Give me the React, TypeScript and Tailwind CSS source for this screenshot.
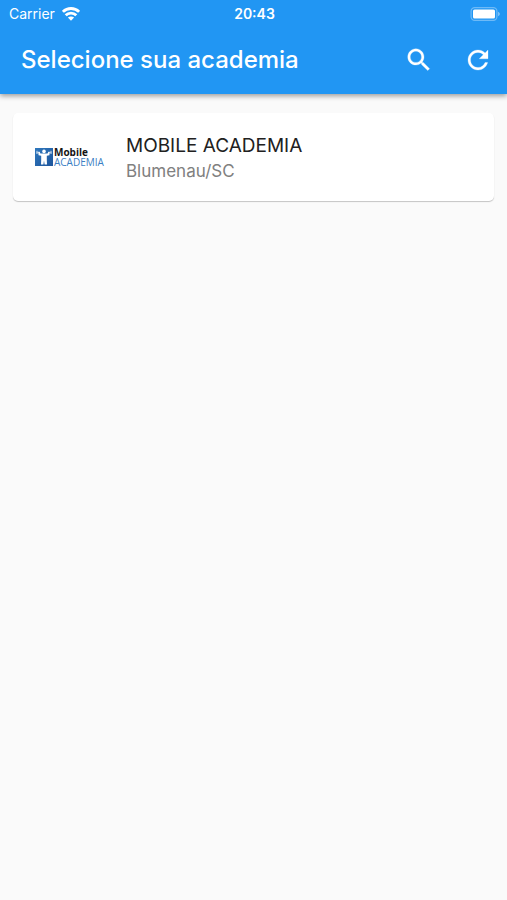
import React from "react";

type Gym = { name: string; city: string };

const gyms: Gym[] = [{ name: "MOBILE ACADEMIA", city: "Blumenau/SC" }];

function WifiIcon() {
  return (
    <svg viewBox="0 0 18 14" className="h-[14px] w-[18px]" fill="none" stroke="currentColor" strokeWidth="2.8" aria-hidden="true">
      <path d="M0.9 4.8C5.4 0.4 12.6 0.4 17.1 4.8" />
      <path d="M3.7 8.3C6.6 5.3 11.4 5.3 14.3 8.3" />
      <path d="M9 13.8L5.9 10.6C7.6 9 10.4 9 12.1 10.6Z" fill="currentColor" stroke="none" />
    </svg>
  );
}

function BatteryIcon() {
  return (
    <svg viewBox="0 0 30 14" className="h-[14px] w-[30px]" aria-hidden="true">
      <rect x="1.1" y="0.6" width="25.8" height="12.8" rx="3.6" fill="none" stroke="#fff" strokeOpacity="0.35" strokeWidth="1.2" />
      <rect x="3" y="2.4" width="22" height="9.2" rx="1.6" fill="#fff" />
      <path d="M28.2 4.8C30.2 5.6 30.2 8.4 28.2 9.2Z" fill="#fff" fillOpacity="0.5" />
    </svg>
  );
}

function SearchIcon() {
  return (
    <svg viewBox="0 0 24 24" className="size-[30px]" fill="currentColor" stroke="currentColor" strokeWidth="0.2" aria-hidden="true">
      <path d="M15.5 14h-.79l-.28-.27C15.41 12.59 16 11.11 16 9.5 16 5.91 13.09 3 9.5 3S3 5.91 3 9.5 5.91 16 9.5 16c1.61 0 3.09-.59 4.23-1.57l.27.28v.79l5 4.99L20.49 19l-4.99-5zm-6 0C7.01 14 5 11.99 5 9.5S7.01 5 9.5 5 14 7.01 14 9.5 11.99 14 9.5 14z" />
    </svg>
  );
}

function RefreshIcon() {
  return (
    <svg viewBox="0 0 24 24" className="size-[30px]" fill="currentColor" stroke="currentColor" strokeWidth="0.2" aria-hidden="true">
      <path d="M17.65 6.35C16.2 4.9 14.21 4 12 4c-4.42 0-7.99 3.58-7.99 8s3.57 8 7.99 8c3.73 0 6.84-2.55 7.73-6h-2.08c-.82 2.33-3.04 4-5.65 4-3.31 0-6-2.69-6-6s2.69-6 6-6c1.66 0 3.14.69 4.22 1.78L13 11h7V4l-2.35 2.35z" />
    </svg>
  );
}

function GymLogo() {
  return (
    <div className="flex w-[70px] shrink-0 items-center gap-px font-['Open_Sans',sans-serif]">
      <svg viewBox="0 0 18 18" className="size-[18px] shrink-0" aria-hidden="true">
        <defs>
          <linearGradient id="logo-blue" x1="0" y1="0" x2="1" y2="1">
            <stop offset="0" stopColor="#2f78bd" />
            <stop offset="1" stopColor="#1d559c" />
          </linearGradient>
        </defs>
        <rect width="18" height="18" fill="url(#logo-blue)" />
        <g fill="#fff">
          <circle cx="9" cy="3.4" r="1.8" />
          <path d="M3.2 3.8H4.6L5.4 5.6H12.6L13.4 3.8H14.8L14.4 7.2L11.8 7.8V11.4L12 16.4H9.6L9 12.4L8.4 16.4H6L6.2 11.4V7.8L3.6 7.2Z" />
          <rect x="1.4" y="2.8" width="1.2" height="3.2" opacity="0.7" />
          <rect x="15.4" y="2.8" width="1.2" height="3.2" opacity="0.7" />
          <path d="M1.6 4.2H5V4.8H1.6ZM13 4.2H16.4V4.8H13Z" opacity="0.7" />
        </g>
      </svg>
      <div className="flex flex-col whitespace-nowrap text-[10px] leading-[10px]">
        <span className="font-bold text-[#151515]">Mobile</span>
        <span className="text-[#3b7fc4]">ACADEMIA</span>
      </div>
    </div>
  );
}

export default function App() {
  return (
    <div className="min-h-screen bg-[#fafafa] font-[Inter,'Liberation_Sans',sans-serif]">
      <header className="bg-[#2196f3] text-white shadow-[0_2px_5px_rgba(0,0,0,0.38)]">
        <div className="grid h-[27px] grid-cols-3 items-center pr-[7px] pl-[9px] text-[14px] leading-[18px]">
          <div className="flex items-center gap-[7px]">
            <span>Carrier</span>
            <WifiIcon />
          </div>
          <time className="text-center font-semibold">20:43</time>
          <div className="flex justify-end">
            <BatteryIcon />
          </div>
        </div>
        <div className="flex h-[67px] items-center pb-[2px] pl-[21px]">
          <h1 className="flex-1 truncate text-[24px] leading-[32px] font-medium">Selecione sua academia</h1>
          <button type="button" aria-label="Buscar" className="flex h-[59px] w-[59px] items-center justify-center">
            <SearchIcon />
          </button>
          <button type="button" aria-label="Atualizar" className="flex h-[59px] w-[59px] items-center justify-center">
            <RefreshIcon />
          </button>
        </div>
      </header>
      <main className="px-[13px] pt-[19px]">
        <ul className="flex flex-col gap-3">
          {gyms.map((gym) => (
            <li key={gym.name}>
              <button
                type="button"
                className="flex h-[88px] w-full items-center gap-[21px] rounded-[5px] bg-white px-[22px] text-left shadow-[0_1px_1px_rgba(0,0,0,0.22)]"
              >
                <GymLogo />
                <span className="flex flex-col pt-px">
                  <span className="text-[19px] leading-[26px] text-[#212121]">{gym.name}</span>
                  <span className="text-[17px] leading-[24px] text-[#808080]">{gym.city}</span>
                </span>
              </button>
            </li>
          ))}
        </ul>
      </main>
    </div>
  );
}
